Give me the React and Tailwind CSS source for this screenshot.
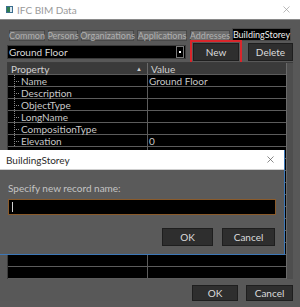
import { X } from 'lucide-react';

const props = ['Name', 'Description', 'ObjectType', 'LongName', 'CompositionType', 'Elevation'];
const values = { Name: 'Ground Floor', Elevation: '0' };

function Tab({ className, children }) {
  return (
    <div
      className={`shrink-0 h-[11px] flex items-center justify-center whitespace-nowrap bg-[#6c6c6c] border border-[#484848] text-[#b0b0b0] text-[9px] ${className}`}
    >
      {children}
    </div>
  );
}

function Row({ name }) {
  return (
    <div className="flex h-[13px] border-b border-[#5c5c5c] bg-black">
      <div className="w-[140px] flex items-center border-r border-[#5c5c5c]">
        {name && (
          <>
            <div className="relative w-[13px] h-full">
              <div className="absolute left-[6px] top-0 h-full border-l border-dotted border-[#888]" />
              <div className="absolute left-[6px] top-[6px] w-[5px] border-t border-dotted border-[#888]" />
            </div>
            <span className="text-[#c8c8c8]">{name}</span>
          </>
        )}
      </div>
      <div className="flex-1 flex items-center pl-[1px] text-[#c8c8c8]">{values[name]}</div>
    </div>
  );
}

export default function App() {
  const rows = [...props, ...Array(11).fill('')];
  return (
    <div
      className="relative w-[300px] h-[307px] overflow-hidden bg-[#595959] flex flex-col text-[10px] leading-none"
      style={{ fontFamily: 'Lato, "Open Sans", sans-serif' }}
    >
      {/* Title bar */}
      <div className="h-[20px] bg-white flex items-center border-b border-[#8a8a8a] shrink-0">
        <div className="ml-[6px] w-[7px] h-[7px] border border-[#3b6e8f] bg-[#d9e6ee] flex">
          <div className="w-[3px] h-full bg-[#2f7d4f]" />
        </div>
        <span className="ml-[4px] text-[#9a9a9a]">IFC BIM Data</span>
        <X className="ml-auto mr-[8px] text-[#9a9a9a]" size={11} strokeWidth={1.5} />
      </div>

      <div className="flex flex-col px-[7px] pt-[8px] bg-[#585858]">
        {/* Tabs */}
        <div className="flex items-end h-[13px] gap-[3px] pl-[2px]">
          <Tab className="w-[36px]">Common</Tab>
          <Tab className="w-[30px]">Persons</Tab>
          <Tab className="w-[53px]">Organizations</Tab>
          <Tab className="w-[50px]">Applications</Tab>
          <Tab className="w-[40px]">Addresses</Tab>
          <div className="shrink-0 w-[59px] h-[13px] -ml-[1px] flex items-center justify-center whitespace-nowrap bg-black border border-[#484848] text-[#ececec] text-[9px]">
            BuildingStorey
          </div>
        </div>

        {/* Combo row */}
        <div className="flex items-center h-[19px] mt-[1px]">
          <div className="w-[179px] h-[14px] bg-black border border-[#3a3a3a] flex items-center">
            <span className="pl-[1px] text-[#d8d8d8]">Ground Floor</span>
            <div className="ml-auto mr-[1px] w-[8px] h-[12px] border border-[#777] flex items-center justify-center">
              <div className="w-[2px] h-[2px] bg-white" />
            </div>
          </div>
          <div className="ml-[7px] w-[46px] h-[18px] bg-[#2e2e2e] border border-[#1e1e1e] flex items-center justify-center text-[#dcdcdc] outline-2 outline-offset-1 outline-[#d9262b]">
            New
          </div>
          <div className="ml-[9px] w-[45px] h-[18px] bg-[#2e2e2e] border border-[#1e1e1e] flex items-center justify-center text-[#dcdcdc]">
            Delete
          </div>
        </div>

        {/* Table */}
        <div className="mt-[1px] h-[217px] flex border-l border-t border-[#3c3c3c] overflow-hidden">
          <div className="flex-1 flex flex-col">
            <div className="flex h-[13px] bg-[#3a3a3a] border-b border-[#5c5c5c]">
              <div className="w-[140px] flex items-center pl-[3px] border-r border-[#6a6a6a] text-[#d0d0d0]">
                Property
                <span className="ml-auto mr-[5px] text-[6px] text-[#cfcfcf]">▲</span>
              </div>
              <div className="flex-1 flex items-center pl-[3px] text-[#d0d0d0]">Value</div>
            </div>
            {rows.map((r, i) => (
              <Row key={i} name={r} />
            ))}
          </div>
          <div className="w-[7px] bg-[#4e4e4e] border-l border-[#6a6a6a]" />
        </div>

        {/* Bottom buttons */}
        <div className="flex justify-end gap-[8px] mt-[6px]">
          <div className="w-[46px] h-[16px] bg-[#2e2e2e] border border-[#1e1e1e] flex items-center justify-center text-[#dcdcdc]">
            OK
          </div>
          <div className="w-[47px] h-[16px] bg-[#2e2e2e] border border-[#1e1e1e] flex items-center justify-center text-[#dcdcdc]">
            Cancel
          </div>
        </div>
      </div>

      {/* Dialog */}
      <div className="absolute left-0 top-[150px] w-[285px] h-[105px] bg-[#5a5a5a] border-r border-b border-[#3d78b8] flex flex-col">
        <div className="h-[20px] bg-white flex items-center shrink-0 border-b border-[#cfcfcf]">
          <span className="ml-[6px] text-[#2a2a2a]">BuildingStorey</span>
          <X className="ml-auto mr-[8px] text-[#555]" size={11} strokeWidth={1.5} />
        </div>
        <div className="flex flex-col px-[8px]">
          <span className="mt-[13px] text-[#c4c4c4]">Specify new record name:</span>
          <div className="mt-[6px] w-[268px] h-[16px] bg-black border border-[#8a5a2a] flex items-center pl-[3px]">
            <div className="w-[1px] h-[10px] bg-[#d0d0d0]" />
          </div>
          <div className="flex justify-end gap-[9px] mt-[13px] mr-[1px]">
            <div className="w-[51px] h-[18px] bg-[#2e2e2e] border border-[#1e1e1e] flex items-center justify-center text-[#dcdcdc]">
              OK
            </div>
            <div className="w-[53px] h-[18px] bg-[#2e2e2e] border border-[#1e1e1e] flex items-center justify-center text-[#dcdcdc]">
              Cancel
            </div>
          </div>
        </div>
      </div>
    </div>
  );
}
